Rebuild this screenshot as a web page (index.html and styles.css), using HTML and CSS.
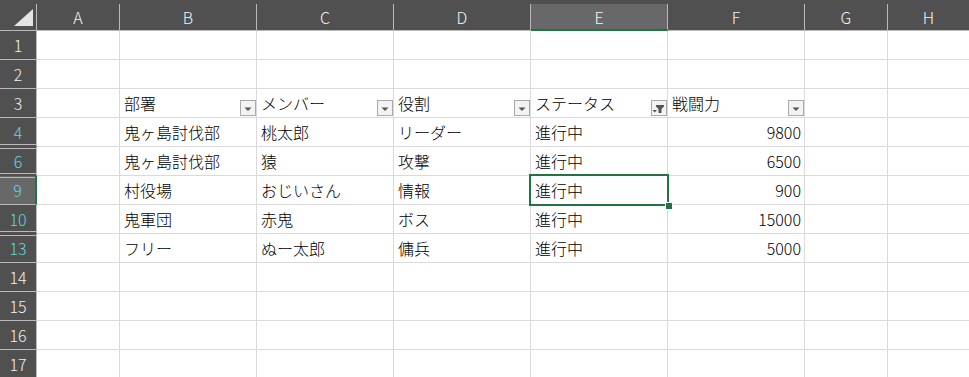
FILE: index.html
```html
<!DOCTYPE html>
<html>
<head>
    <title>フィルター</title>
    <meta charset="UTF-8">
    <link rel="stylesheet" href="styles.css">
</head>
<body>
    <div class="sheet">
        <div class="row head">
            <div class="corner">
                <svg width="36" height="26" viewBox="0 0 36 26"><polygon points="33,5 33,22 14,22" fill="#e4e4e4"/></svg>
            </div>
            <div class="col">A</div>
            <div class="col">B</div>
            <div class="col">C</div>
            <div class="col">D</div>
            <div class="col sel">E</div>
            <div class="col">F</div>
            <div class="col">G</div>
            <div class="col">H</div>
        </div>

        <div class="row">
            <div class="num">1</div>
            <div class="cell"></div><div class="cell"></div><div class="cell"></div><div class="cell"></div>
            <div class="cell"></div><div class="cell"></div><div class="cell"></div><div class="cell"></div>
        </div>
        <div class="row">
            <div class="num">2</div>
            <div class="cell"></div><div class="cell"></div><div class="cell"></div><div class="cell"></div>
            <div class="cell"></div><div class="cell"></div><div class="cell"></div><div class="cell"></div>
        </div>

        <!-- table header with filter buttons -->
        <div class="row">
            <div class="num">3</div>
            <div class="cell"></div>
            <div class="cell f"><span>部署</span><span class="btn"><svg width="14" height="14" viewBox="0 0 14 14"><path d="M3.5 6.5h7l-3.5 3.5z" fill="#555"/></svg></span></div>
            <div class="cell f"><span>メンバー</span><span class="btn"><svg width="14" height="14" viewBox="0 0 14 14"><path d="M3.5 6.5h7l-3.5 3.5z" fill="#555"/></svg></span></div>
            <div class="cell f"><span>役割</span><span class="btn"><svg width="14" height="14" viewBox="0 0 14 14"><path d="M3.5 6.5h7l-3.5 3.5z" fill="#555"/></svg></span></div>
            <div class="cell f"><span>ステータス</span><span class="btn"><svg width="14" height="14" viewBox="0 0 14 14"><path d="M4 4h8v1.5l-2.5 2.5v4h-3v-4l-2.5-2.5z" fill="#555"/><path d="M0.5 9h4.5l-2.25 2.5z" fill="#555"/></svg></span></div>
            <div class="cell f"><span>戦闘力</span><span class="btn"><svg width="14" height="14" viewBox="0 0 14 14"><path d="M3.5 6.5h7l-3.5 3.5z" fill="#555"/></svg></span></div>
            <div class="cell"></div>
            <div class="cell"></div>
        </div>

        <div class="row">
            <div class="num hit gb">4</div>
            <div class="cell"></div>
            <div class="cell">鬼ヶ島討伐部</div>
            <div class="cell">桃太郎</div>
            <div class="cell">リーダー</div>
            <div class="cell">進行中</div>
            <div class="cell n">9800</div>
            <div class="cell"></div><div class="cell"></div>
        </div>
        <div class="row">
            <div class="num hit gt gb">6</div>
            <div class="cell"></div>
            <div class="cell">鬼ヶ島討伐部</div>
            <div class="cell">猿</div>
            <div class="cell">攻撃</div>
            <div class="cell">進行中</div>
            <div class="cell n">6500</div>
            <div class="cell"></div><div class="cell"></div>
        </div>
        <div class="row">
            <div class="num hit gt cur">9</div>
            <div class="cell"></div>
            <div class="cell">村役場</div>
            <div class="cell">おじいさん</div>
            <div class="cell">情報</div>
            <div class="cell active">進行中</div>
            <div class="cell n">900</div>
            <div class="cell"></div><div class="cell"></div>
        </div>
        <div class="row">
            <div class="num hit gb">10</div>
            <div class="cell"></div>
            <div class="cell">鬼軍団</div>
            <div class="cell">赤鬼</div>
            <div class="cell">ボス</div>
            <div class="cell">進行中</div>
            <div class="cell n">15000</div>
            <div class="cell"></div><div class="cell"></div>
        </div>
        <div class="row">
            <div class="num hit gt">13</div>
            <div class="cell"></div>
            <div class="cell">フリー</div>
            <div class="cell">ぬー太郎</div>
            <div class="cell">傭兵</div>
            <div class="cell">進行中</div>
            <div class="cell n">5000</div>
            <div class="cell"></div><div class="cell"></div>
        </div>

        <div class="row">
            <div class="num">14</div>
            <div class="cell"></div><div class="cell"></div><div class="cell"></div><div class="cell"></div>
            <div class="cell"></div><div class="cell"></div><div class="cell"></div><div class="cell"></div>
        </div>
        <div class="row">
            <div class="num">15</div>
            <div class="cell"></div><div class="cell"></div><div class="cell"></div><div class="cell"></div>
            <div class="cell"></div><div class="cell"></div><div class="cell"></div><div class="cell"></div>
        </div>
        <div class="row">
            <div class="num">16</div>
            <div class="cell"></div><div class="cell"></div><div class="cell"></div><div class="cell"></div>
            <div class="cell"></div><div class="cell"></div><div class="cell"></div><div class="cell"></div>
        </div>
        <div class="row">
            <div class="num">17</div>
            <div class="cell"></div><div class="cell"></div><div class="cell"></div><div class="cell"></div>
            <div class="cell"></div><div class="cell"></div><div class="cell"></div><div class="cell"></div>
        </div>
    </div>
</body>
</html>
```

FILE: styles.css
```css
body {
    margin: 0;
    background: #fff;
    font-family: "Noto Sans CJK JP", "Noto Sans", sans-serif;
    font-weight: 300;
    overflow: hidden;
}

.sheet {
    width: 970px;
}

.row {
    display: grid;
    grid-template-columns: 37px 83px 137px 137px 137px 137px 137px 83px 82px;
    height: 29px;
}
.row > div {
    box-sizing: border-box;
    border-right: 1px solid #dadada;
    border-bottom: 1px solid #dadada;
    min-width: 0;
}

/* column letters */
.head {
    height: 31px;
    padding-top: 4px;
    background: #505050;
    box-sizing: border-box;
}
.head > div {
    background: #505050;
    border-color: #b9b9b9;
    color: #f4f4f4;
    font-size: 16px;
    display: flex;
    align-items: center;
    justify-content: center;
}
.head .corner {
    display: block;
}
.corner svg {
    display: block;
}
.head .sel {
    background: #686868;
    border-bottom: 2px solid #217346;
}

/* row numbers */
.num {
    background: #505050;
    border-right-color: #b9b9b9 !important;
    border-bottom-color: #b9b9b9 !important;
    color: #f0f0f0;
    font-size: 16px;
    line-height: 28px;
    text-align: center;
    background-repeat: no-repeat;
}
.num.hit {
    color: #62d8dc;
}
.num.cur {
    background-color: #686868;
    border-right: 2px solid #217346 !important;
}
.num.gb {
    border-bottom-color: #505050 !important;
    background-image: linear-gradient(to top, transparent 1px, #b9b9b9 1px 2px, transparent 2px);
}
.num.gt {
    background-image: linear-gradient(to bottom, transparent 1px, #b9b9b9 1px 2px, transparent 2px);
}
.num.gt.gb {
    background-image:
        linear-gradient(to bottom, transparent 1px, #b9b9b9 1px 2px, transparent 2px),
        linear-gradient(to top, transparent 1px, #b9b9b9 1px 2px, transparent 2px);
}

/* cells */
.cell {
    font-size: 16px;
    line-height: 28px;
    color: #000;
    padding: 0 4px;
    white-space: nowrap;
    overflow: visible;
}
.cell.n {
    text-align: right;
    padding-right: 3px;
}
.cell.f {
    display: flex;
    justify-content: space-between;
    padding-right: 0;
}
.btn {
    align-self: flex-end;
    margin-bottom: 1px;
    width: 16px;
    height: 16px;
    box-sizing: border-box;
    border: 1px solid #a9a9a9;
    background: #f3f3f3;
}
.btn svg {
    display: block;
}

.cell.active {
    position: relative;
}
.cell.active::after {
    content: "";
    position: absolute;
    left: -2px;
    top: -2px;
    right: -2px;
    bottom: -2px;
    border: 2px solid #217346;
}
.cell.active::before {
    content: "";
    position: absolute;
    right: -5px;
    bottom: -5px;
    width: 6px;
    height: 6px;
    background: #217346;
    outline: 1px solid #fff;
    z-index: 1;
}
```
